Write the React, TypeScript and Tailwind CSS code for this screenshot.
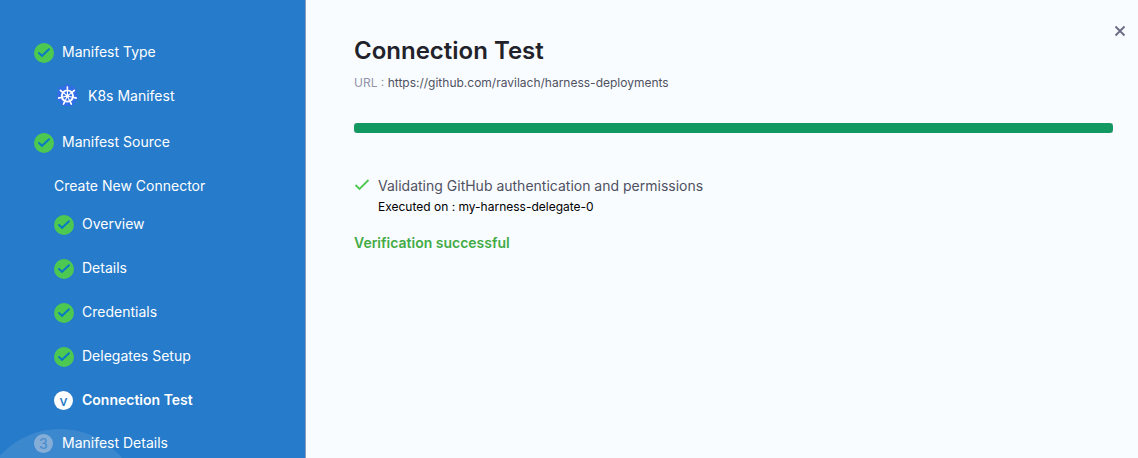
import React from 'react';

type StepProps = { label: string; current?: boolean; marker?: string };

function DoneIcon() {
  return (
    <svg viewBox="0 0 20 20" className="mt-0.5 size-5 shrink-0" aria-hidden="true">
      <circle cx="10" cy="10" r="10" fill="#4dc952" />
      <path d="M5 10 8 12.8 15 6.2" fill="none" stroke="#0b7ac4" strokeWidth="2" strokeLinecap="round" />
    </svg>
  );
}

function HelmIcon() {
  const spokes = [0, 1, 2, 3, 4, 5, 6].map((i) => (i * 360) / 7);
  return (
    <svg viewBox="0 0 24 24" className="size-6 shrink-0" aria-hidden="true">
      <path
        d="M11.4 1.6 18.8 5 20.8 13.4 15.7 20.6H7.1L2 13.4 4 5Z"
        fill="#326de6"
        stroke="#326de6"
        strokeWidth="2.6"
        strokeLinejoin="round"
      />
      <g transform="translate(-0.6 0)">
        <circle cx="12" cy="12" r="5.6" fill="none" stroke="#fff" strokeWidth="1.9" />
        <circle cx="12" cy="12" r="1.8" fill="#fff" />
        {spokes.map((a) => (
          <g key={a} transform={`rotate(${a} 12 12)`} stroke="#fff" strokeLinecap="round">
            <path d="M12 11V2.8" strokeWidth="1.1" />
            <path d="M12 4.6V3.1" strokeWidth="1.6" />
          </g>
        ))}
      </g>
    </svg>
  );
}

function Step({ label, current, marker }: StepProps) {
  return (
    <li className="flex h-5 items-center gap-2" aria-current={current ? 'step' : undefined}>
      {marker ? (
        <span className="flex w-5 shrink-0">
          <span
            className={
              current
                ? 'flex size-[19px] items-center justify-center rounded-full bg-white pt-px text-sm font-medium text-[#267bca]'
                : 'flex size-[19px] items-center justify-center rounded-full bg-[#84add8] pt-px text-sm font-medium text-[#4c8dcf]'
            }
          >
            {marker}
          </span>
        </span>
      ) : (
        <DoneIcon />
      )}
      <span className={current ? 'font-semibold' : ''}>{label}</span>
    </li>
  );
}

export default function App() {
  return (
    <div className="flex min-h-screen bg-[#f9fcff] font-['Inter',sans-serif]">
      <nav
        aria-label="Wizard steps"
        className="relative w-[306px] shrink-0 overflow-hidden border-r border-[#8f9dbd] bg-[#267bca] pt-[42px] pb-1 pl-[34px] text-sm text-white"
      >
        <div className="absolute top-[429px] -left-[21px] size-[162px] rounded-full bg-white/10" />
        <ol className="relative flex flex-col">
          <Step label="Manifest Type" />
          <li className="mt-6 flex h-5 items-center gap-2 pl-[22px]">
            <HelmIcon />
            <span>K8s Manifest</span>
          </li>
          <li className="mt-[26px]">
            <ul>
              <Step label="Manifest Source" />
            </ul>
            <div className="mt-6 pl-5">
              <p>Create New Connector</p>
              <ol className="mt-[18px] flex flex-col gap-6">
                <Step label="Overview" />
                <Step label="Details" />
                <Step label="Credentials" />
                <Step label="Delegates Setup" />
                <Step label="Connection Test" marker="v" current />
              </ol>
            </div>
          </li>
          <li className="mt-[23px]">
            <ul>
              <Step label="Manifest Details" marker="3" />
            </ul>
          </li>
        </ol>
      </nav>
      <main className="relative min-w-0 flex-1 pt-[35px] pr-[25px] pl-12">
        <button
          type="button"
          aria-label="Close"
          className="absolute top-[23px] right-[10px] flex size-4 items-center justify-center text-[#6b6d85]"
        >
          <svg viewBox="0 0 16 16" className="size-4" aria-hidden="true">
            <path d="M3.5 3.5 12.5 12.5M12.5 3.5 3.5 12.5" stroke="currentColor" strokeWidth="1.9" />
          </svg>
        </button>
        <h1 className="text-2xl font-semibold text-[#22222a]">Connection Test</h1>
        <p className="mt-[7px] text-xs leading-[18px] text-[#4f5162]">
          <span className="text-[#9293ab]">URL : </span>
          https://github.com/ravilach/harness-deployments
        </p>
        <div
          role="progressbar"
          aria-label="Connection test progress"
          aria-valuenow={100}
          aria-valuemin={0}
          aria-valuemax={100}
          className="mt-[31px] rounded-xs bg-[#b0b1c4]"
        >
          <div className="h-[10px] w-full rounded bg-[#129961]" />
        </div>
        <div className="mt-11 flex gap-2">
          <svg viewBox="0 0 16 16" className="size-4 shrink-0" aria-hidden="true">
            <path d="M1.5 8 5.5 12 14.5 3" fill="none" stroke="#4dc952" strokeWidth="1.8" />
          </svg>
          <div>
            <p className="text-sm leading-[18px] text-[#4f5162]">Validating GitHub authentication and permissions</p>
            <p className="mt-[3px] text-xs leading-[18px] text-black">Executed on : my-harness-delegate-0</p>
          </div>
        </div>
        <p className="mt-[17px] text-sm font-semibold text-[#42ab45]">Verification successful</p>
      </main>
    </div>
  );
}
